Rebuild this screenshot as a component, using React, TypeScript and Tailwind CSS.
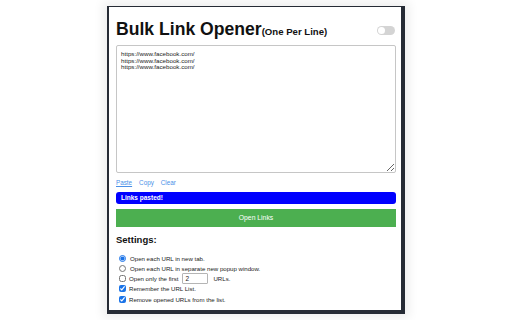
import { useState } from 'react';

const URLS = ['https://www.facebook.com/', 'https://www.facebook.com/', 'https://www.facebook.com/'].join('\n');

export default function App() {
  const [links, setLinks] = useState(URLS);
  const [mode, setMode] = useState<'tab' | 'popup'>('tab');
  const [limit, setLimit] = useState(false);
  const [count, setCount] = useState('2');
  const [remember, setRemember] = useState(true);
  const [removeOpened, setRemoveOpened] = useState(true);
  const [dark, setDark] = useState(false);

  return (
    <div
      className="h-[320px] w-[512px] overflow-hidden bg-white pl-[107px] pt-[6px] text-[#222]"
      style={{ fontFamily: '"Liberation Sans", Arial, sans-serif' }}
    >
      <div className="h-[308px] w-[298px] border-b-[4px] border-l-[2px] border-r-[4px] border-t-[1px] border-[#262b35] bg-white pl-[7px] pr-[5px] pt-[13px] shadow-[0_0_10px_4px_rgba(0,0,0,0.07)]">
        {/* header */}
        <div className="flex h-[20px] items-center justify-between">
          <h1 className="text-[17.6px] font-bold leading-[20px] text-[#111]">
            Bulk Link Opener<span className="text-[9.6px]">(One Per Line)</span>
          </h1>
          <button
            aria-label="Toggle theme"
            onClick={() => setDark(!dark)}
            className="mr-[1px] flex h-[9px] w-[18px] items-center rounded-full bg-[#d4d4d4] px-[1px]"
          >
            <span className="h-[7px] w-[7px] rounded-full bg-white" />
          </button>
        </div>

        <textarea
          value={links}
          onChange={(e) => setLinks(e.target.value)}
          className="mt-[5px] block h-[128px] w-[280px] resize rounded-[2px] border border-[#c6c6c6] px-[4px] pt-[5px] text-[6.2px] leading-[6.7px] text-[#222] outline-none"
          style={{ fontFamily: '"Liberation Sans", Arial, sans-serif' }}
        />

        <div className="mt-[6px] flex h-[8px] items-center gap-[7px] text-[6.3px] leading-[8px] text-[#4a8fe7]">
          <a className="underline" onClick={() => setLinks(URLS)}>Paste</a>
          <a>Copy</a>
          <a onClick={() => setLinks('')}>Clear</a>
        </div>

        <div className="mt-[5px] flex h-[12px] w-[280px] items-center rounded-[3px] bg-[#0000ff] pl-[5px] text-[6.5px] font-bold text-white">
          Links pasted!
        </div>

        <button className="mt-[5px] flex h-[18px] w-[280px] items-center justify-center bg-[#4caf50] text-[6.8px] text-white">
          Open Links
        </button>

        <h2 className="mt-[7px] h-[12px] text-[9.5px] font-bold leading-[12px] text-[#111]">Settings:</h2>

        <div className="mt-[7px] flex flex-col pl-[3px] text-[6.1px]">
          <label className="flex h-[10.25px] items-center gap-[4px]">
            <input
              type="radio"
              name="mode"
              checked={mode === 'tab'}
              onChange={() => setMode('tab')}
              className="m-0 h-[7px] w-[7px] accent-[#1a73e8]"
            />
            Open each URL in new tab.
          </label>
          <label className="flex h-[10.25px] items-center gap-[4px]">
            <input
              type="radio"
              name="mode"
              checked={mode === 'popup'}
              onChange={() => setMode('popup')}
              className="m-0 h-[7px] w-[7px] accent-[#1a73e8]"
            />
            Open each URL in separate new popup window.
          </label>
          <label className="flex h-[10.25px] items-center gap-[3px]">
            <input
              type="checkbox"
              checked={limit}
              onChange={() => setLimit(!limit)}
              className="m-0 h-[7px] w-[7px] accent-[#1a73e8]"
            />
            Open only the first
            <input
              value={count}
              onChange={(e) => setCount(e.target.value)}
              className="mx-[1px] h-[11px] w-[26px] rounded-[1px] border border-[#b5b5b5] px-[2px] text-[6.5px] outline-none"
              style={{ fontFamily: '"Liberation Sans", Arial, sans-serif' }}
            />
            <span className="ml-[1px]">URLs.</span>
          </label>
          <label className="flex h-[10.25px] items-center gap-[3px]">
            <input
              type="checkbox"
              checked={remember}
              onChange={() => setRemember(!remember)}
              className="m-0 h-[7px] w-[7px] accent-[#1a73e8]"
            />
            Remember the URL List.
          </label>
          <label className="flex h-[10.25px] items-center gap-[3px]">
            <input
              type="checkbox"
              checked={removeOpened}
              onChange={() => setRemoveOpened(!removeOpened)}
              className="m-0 h-[7px] w-[7px] accent-[#1a73e8]"
            />
            Remove opened URLs from the list.
          </label>
        </div>
      </div>
    </div>
  );
}
